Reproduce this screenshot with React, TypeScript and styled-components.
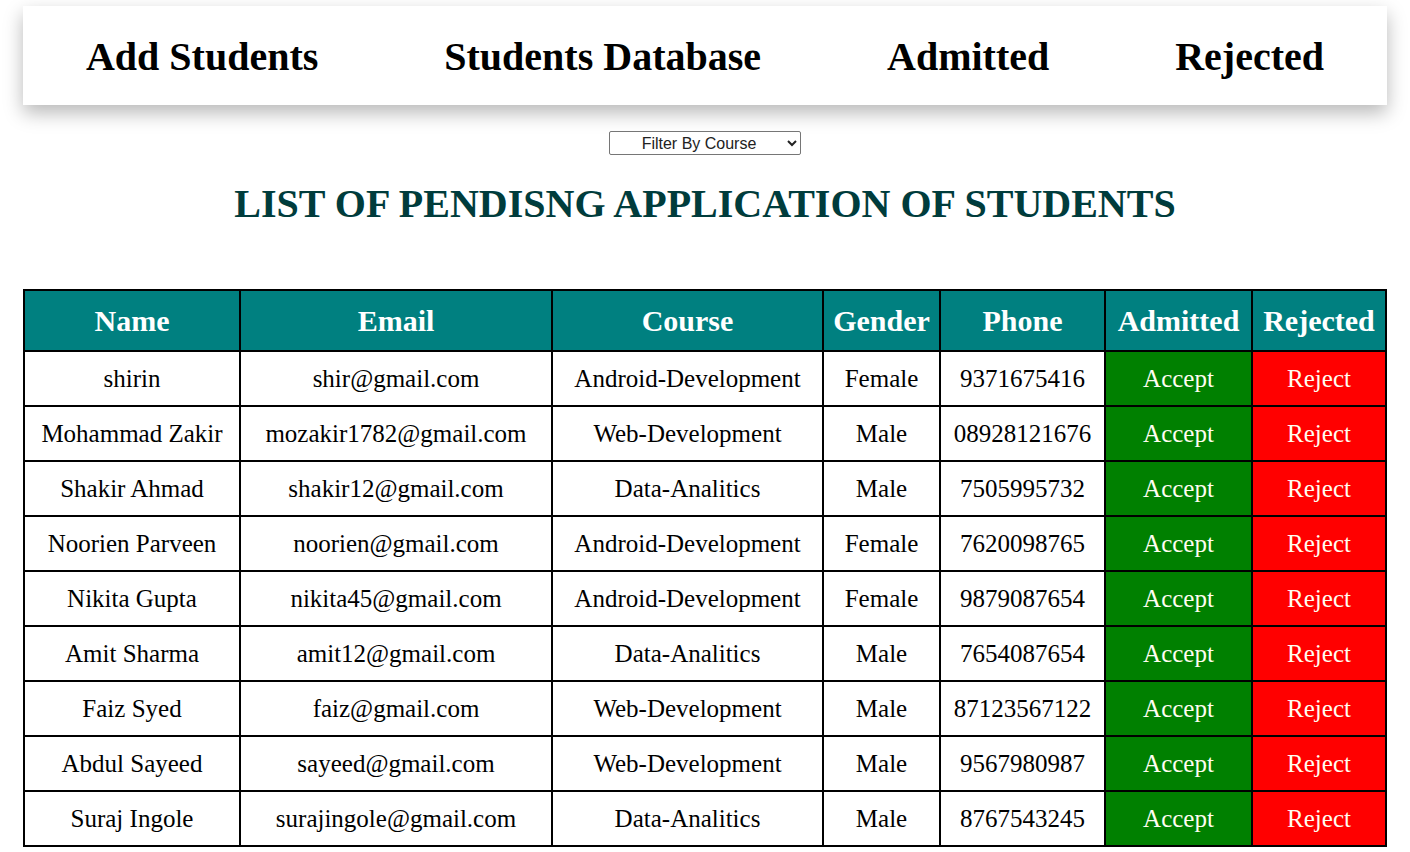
import React from 'react';
import styled, { createGlobalStyle } from 'styled-components';

const GlobalStyle = createGlobalStyle`
  body {
    margin: 0;
    background: #ffffff;
    font-family: "Liberation Serif", "Times New Roman", serif;
  }
`;

const Page = styled.div`
  padding: 6px 23px 0;
`;

const Navbar = styled.nav`
  display: flex;
  justify-content: space-around;
  align-items: center;
  height: 99px;
  background: #ffffff;
  box-shadow: 0 8px 18px rgba(0, 0, 0, 0.28);
`;

const NavLink = styled.a`
  font-size: 40px;
  font-weight: bold;
  color: #000000;
  text-decoration: none;
  cursor: pointer;
  padding-top: 2px;
`;

const FilterRow = styled.div`
  display: flex;
  justify-content: center;
  margin-top: 26px;
`;

const Select = styled.select`
  width: 192px;
  height: 24px;
  font-family: "Liberation Sans", Arial, sans-serif;
  font-size: 16px;
  color: #222;
  text-align: center;
  border: 1px solid #767676;
  border-radius: 2px;
  background: #ffffff;
`;

const Heading = styled.h1`
  margin: 25px 0 62px;
  text-align: center;
  font-size: 40px;
  font-weight: bold;
  color: #003c3c;
`;

const Table = styled.table`
  table-layout: fixed;
  border-collapse: collapse;
  border: 2px solid #000;
`;

const Col = styled.col<{ $w: number }>`
  width: ${({ $w }) => $w}px;
`;

const HeadCell = styled.th`
  background: #008080;
  color: #ffffff;
  font-size: 30px;
  font-weight: bold;
  height: 59px;
  padding: 0;
  border: 2px solid #000;
  white-space: nowrap;
`;

const Cell = styled.td<{ $tone?: 'accept' | 'reject' }>`
  height: 53px;
  padding: 0;
  text-align: center;
  font-size: 25px;
  border: 2px solid #000;
  white-space: nowrap;
  color: ${({ $tone }) => ($tone ? '#fffdf0' : '#000')};
  background: ${({ $tone }) =>
    $tone === 'accept' ? '#008000' : $tone === 'reject' ? '#ff0000' : '#fff'};
  cursor: ${({ $tone }) => ($tone ? 'pointer' : 'default')};
`;

const columns = [
  { title: 'Name', w: 216 },
  { title: 'Email', w: 312 },
  { title: 'Course', w: 271 },
  { title: 'Gender', w: 117 },
  { title: 'Phone', w: 165 },
  { title: 'Admitted', w: 147 },
  { title: 'Rejected', w: 134 },
];

const students = [
  ['shirin', 'shir@gmail.com', 'Android-Development', 'Female', '9371675416'],
  ['Mohammad Zakir', 'mozakir1782@gmail.com', 'Web-Development', 'Male', '08928121676'],
  ['Shakir Ahmad', 'shakir12@gmail.com', 'Data-Analitics', 'Male', '7505995732'],
  ['Noorien Parveen', 'noorien@gmail.com', 'Android-Development', 'Female', '7620098765'],
  ['Nikita Gupta', 'nikita45@gmail.com', 'Android-Development', 'Female', '9879087654'],
  ['Amit Sharma', 'amit12@gmail.com', 'Data-Analitics', 'Male', '7654087654'],
  ['Faiz Syed', 'faiz@gmail.com', 'Web-Development', 'Male', '87123567122'],
  ['Abdul Sayeed', 'sayeed@gmail.com', 'Web-Development', 'Male', '9567980987'],
  ['Suraj Ingole', 'surajingole@gmail.com', 'Data-Analitics', 'Male', '8767543245'],
];

const App: React.FC = () => {
  return (
    <>
      <GlobalStyle />
      <Page>
        <Navbar>
          <NavLink>Add Students</NavLink>
          <NavLink>Students Database</NavLink>
          <NavLink>Admitted</NavLink>
          <NavLink>Rejected</NavLink>
        </Navbar>
        <FilterRow>
          <Select defaultValue="">
            <option value="">Filter By Course</option>
            <option>Android-Development</option>
            <option>Web-Development</option>
            <option>Data-Analitics</option>
          </Select>
        </FilterRow>
        <Heading>LIST OF PENDISNG APPLICATION OF STUDENTS</Heading>
        <Table>
          <colgroup>
            {columns.map((c) => (
              <Col key={c.title} $w={c.w} />
            ))}
          </colgroup>
          <thead>
            <tr>
              {columns.map((c) => (
                <HeadCell key={c.title}>{c.title}</HeadCell>
              ))}
            </tr>
          </thead>
          <tbody>
            {students.map((s) => (
              <tr key={s[1]}>
                {s.map((v, i) => (
                  <Cell key={i}>{v}</Cell>
                ))}
                <Cell $tone="accept">Accept</Cell>
                <Cell $tone="reject">Reject</Cell>
              </tr>
            ))}
          </tbody>
        </Table>
      </Page>
    </>
  );
};

export default App;
